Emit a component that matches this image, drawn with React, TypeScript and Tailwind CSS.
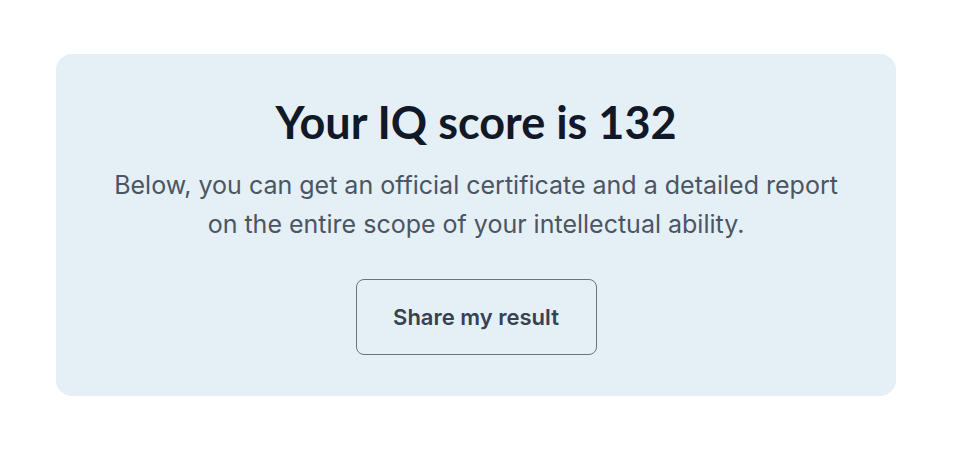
export default function App() {
  return (
    <div className="min-h-[450px] bg-white pt-[54px] pl-[56px] font-['Inter','Noto_Sans',sans-serif]">
      <div className="w-[840px] h-[342px] rounded-2xl bg-[#e5eff6] flex flex-col items-center pt-[36px]">
        <h1 className="text-[45px] leading-[64px] font-bold text-[#111827] font-['Lato','Noto_Sans',sans-serif]">
          Your IQ score is 132
        </h1>
        <p className="mt-[12px] text-[25px] leading-[39px] text-[#4b5563] text-center">
          Below, you can get an official certificate and a detailed report
          <br />
          on the entire scope of your intellectual ability.
        </p>
        <button className="mt-[35px] w-[241px] h-[76px] rounded-lg border border-[#6b7280] text-[22px] font-semibold text-[#374151]">
          Share my result
        </button>
      </div>
    </div>
  )
}
